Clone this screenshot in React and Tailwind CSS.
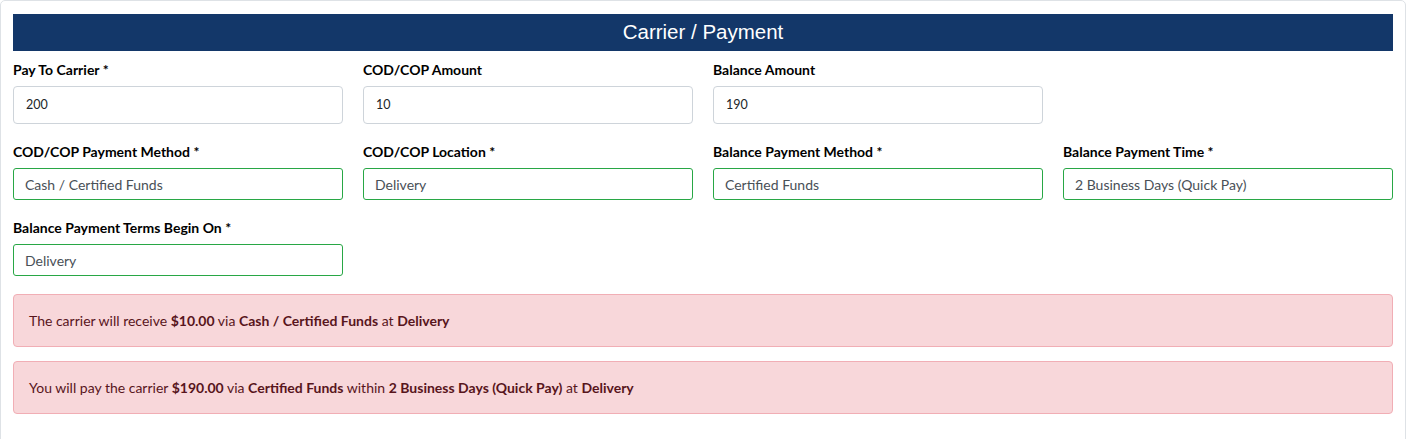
import React from "react"

const font = { fontFamily: '"Segoe UI", Lato, "Noto Sans", sans-serif' }

function Field({ label, value, tall }) {
    return (
        <div className="flex flex-col">
            <label className="text-[14px] font-bold text-black leading-[20px] h-[20px]">{label}</label>
            {tall ? (
                <div className="mt-[6px] h-[38px] rounded-[4px] border border-[#ced4da] bg-white px-[12px] flex items-center text-[12.5px] text-[#212529]">
                    {value}
                </div>
            ) : (
                <div className="mt-[6px] h-[32px] rounded-[3px] border border-[#28a745] bg-white px-[11px] flex items-center text-[14px] text-[#495057]">
                    {value}
                </div>
            )}
        </div>
    )
}

function Alert({ children }) {
    return (
        <div className="h-[53px] rounded-[4px] border border-[#f1aeb5] bg-[#f8d7da] px-[15px] flex items-center text-[14px] text-[#58151c]">
            <span>{children}</span>
        </div>
    )
}

export default function App() {
    return (
        <div className="w-[1407px] h-[439px] bg-white overflow-hidden" style={font}>
            <div className="w-[1406px] h-[450px] rounded-[5px] border border-[#dee2e6] px-[12px] pt-[13px]">
                <div className="h-[37px] bg-[#133769] flex items-center justify-center">
                    <h2 className="text-white text-[20.5px] leading-none" style={{ fontFamily: '"Liberation Sans", Arial, sans-serif' }}>Carrier / Payment</h2>
                </div>

                <div className="grid grid-cols-4 gap-x-[20px] mt-[9px]">
                    <Field label="Pay To Carrier *" value="200" tall />
                    <Field label="COD/COP Amount" value="10" tall />
                    <Field label="Balance Amount" value="190" tall />
                    <div />
                </div>

                <div className="grid grid-cols-4 gap-x-[20px] mt-[18px]">
                    <Field label="COD/COP Payment Method *" value="Cash / Certified Funds" />
                    <Field label="COD/COP Location *" value="Delivery" />
                    <Field label="Balance Payment Method *" value="Certified Funds" />
                    <Field label="Balance Payment Time *" value="2 Business Days (Quick Pay)" />
                </div>

                <div className="grid grid-cols-4 gap-x-[20px] mt-[18px]">
                    <Field label="Balance Payment Terms Begin On *" value="Delivery" />
                </div>

                <div className="mt-[18px] flex flex-col gap-[14px]">
                    <Alert>
                        The carrier will receive <b>$10.00</b> via <b>Cash / Certified Funds</b> at <b>Delivery</b>
                    </Alert>
                    <Alert>
                        You will pay the carrier <b>$190.00</b> via <b>Certified Funds</b> within <b>2 Business Days (Quick Pay)</b> at <b>Delivery</b>
                    </Alert>
                </div>
            </div>
        </div>
    )
}
